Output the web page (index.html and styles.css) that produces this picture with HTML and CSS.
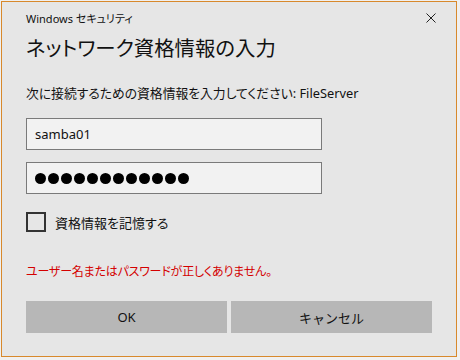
FILE: index.html
```html
<!DOCTYPE html>
<html lang="ja">

<head>
    <meta charset="UTF-8">
    <meta name="viewport" content="width=device-width, initial-scale=1.0">
    <title>Windows セキュリティ</title>
    <link rel="stylesheet" href="styles.css">
</head>

<body>
    <div class="window">
        <div class="titlebar">
            <span class="title">Windows セキュリティ</span>
            <span class="close">
                <svg width="10" height="10" viewBox="0 0 10 10">
                    <path d="M0.5 0.5 L9.5 9.5 M9.5 0.5 L0.5 9.5" stroke="#222" stroke-width="1" fill="none" />
                </svg>
            </span>
        </div>

        <h1>ネットワーク資格情報の入力</h1>

        <p class="subtitle">次に接続するための資格情報を入力してください: FileServer</p>

        <div class="field">samba01</div>
        <div class="field password">
            <span class="dot"></span><span class="dot"></span><span class="dot"></span>
            <span class="dot"></span><span class="dot"></span><span class="dot"></span>
            <span class="dot"></span><span class="dot"></span><span class="dot"></span>
            <span class="dot"></span><span class="dot"></span><span class="dot"></span>
        </div>

        <label class="remember">
            <span class="checkbox"></span>
            資格情報を記憶する
        </label>

        <p class="error">ユーザー名またはパスワードが正しくありません。</p>

        <div class="buttons">
            <button class="btn">OK</button>
            <button class="btn">キャンセル</button>
        </div>
    </div>
</body>

</html>
```

FILE: styles.css
```css
body {
    margin: 0;
    padding: 1px 0 0 1px;
    background-color: #f0f0f0;
    font-family: "Noto Sans", "Noto Sans CJK JP", sans-serif;
    font-feature-settings: "palt";
    color: #000;
}

.window {
    width: 456px;
    height: 356px;
    box-sizing: border-box;
    border: 1px solid #d8892c;
    background-color: #e6e6e6;
    padding: 0 23px 0 24px;
}

.titlebar {
    height: 32px;
    display: flex;
    align-items: center;
    justify-content: space-between;
}

.title {
    font-size: 11px;
    color: #111;
}

.close {
    display: flex;
    margin-right: -3px;
}

h1 {
    margin: 0;
    font-size: 20.4px;
    font-weight: normal;
    line-height: 28px;
    color: #111;
}

.subtitle {
    margin: 22px 0 0;
    font-size: 12.8px;
    line-height: 18px;
    color: #111;
}

.field {
    width: 296px;
    height: 32px;
    box-sizing: border-box;
    margin-top: 16px;
    padding: 0 8px;
    border: 1px solid #7a7a7a;
    background-color: #f2f2f2;
    font-size: 13px;
    line-height: 30px;
    color: #111;
}

.password {
    margin-top: 12px;
    display: flex;
    align-items: center;
    gap: 2px;
}

.dot {
    width: 11px;
    height: 11px;
    border-radius: 50%;
    background-color: #000;
}

.remember {
    display: flex;
    align-items: center;
    gap: 9px;
    height: 20px;
    margin-top: 18px;
    font-size: 13px;
    color: #111;
}

.checkbox {
    width: 20px;
    height: 20px;
    box-sizing: border-box;
    border: 2px solid #333;
}

.error {
    margin: 31px 0 0;
    font-size: 12px;
    letter-spacing: -0.2px;
    line-height: 18px;
    color: #d40000;
}

.buttons {
    display: flex;
    gap: 4px;
    margin-top: 20px;
}

.btn {
    width: 201px;
    height: 32px;
    border: none;
    padding: 0;
    background-color: #b7b7b7;
    font-family: inherit;
    font-size: 13px;
    color: #111;
}
```
